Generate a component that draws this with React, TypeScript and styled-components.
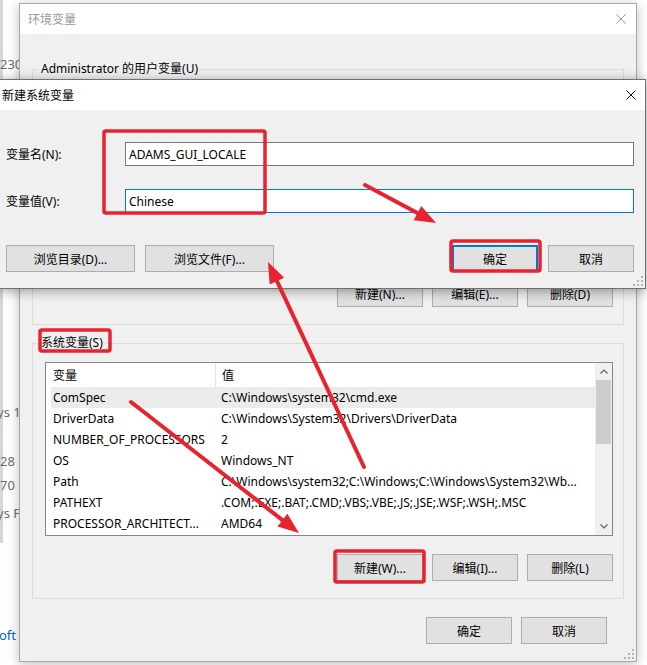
import styled, { createGlobalStyle } from "styled-components";

type EnvVar = { name: string; value: string };

const GlobalStyle = createGlobalStyle`
  html, body {
    margin: 0;
    padding: 0;
    background: #fff;
  }
  body {
    font-family: "Noto Sans", "Noto Sans CJK SC", sans-serif;
    font-size: 12px;
    color: #000;
  }
`;

const RED = "#e8232d";

const Desktop = styled.div`
  position: relative;
  width: 647px;
  height: 665px;
  overflow: hidden;
  background: #fff;
`;

/* the system window peeking out on the left */
const BackWindow = styled.div`
  position: absolute;
  left: 0;
  top: 0;
  width: 19px;
  height: 665px;
  overflow: hidden;
`;

const BackPanel = styled.div`
  height: 543px;
  border-left: 3px solid #d6d6d6;
  box-sizing: border-box;
  display: flex;
  flex-direction: column;
`;

const Snippet = styled.div<{ $gap: number; $shift?: number; $link?: boolean }>`
  margin-top: ${(p) => p.$gap}px;
  margin-left: ${(p) => (p.$shift ?? 0) - 3}px;
  line-height: 16px;
  font-size: 13px;
  white-space: nowrap;
  color: ${(p) => (p.$link ? "#0066cc" : "#6d6d6d")};
`;

const Window = styled.div<{ $active?: boolean }>`
  position: absolute;
  box-sizing: border-box;
  background: #f0f0f0;
  border: 1px solid ${(p) => (p.$active ? "#707070" : "#a8a8a8")};
  box-shadow: 0 2px 11px rgba(0, 0, 0, ${(p) => (p.$active ? 0.38 : 0.26)});
  display: flex;
  flex-direction: column;
`;

const EnvWindow = styled(Window)`
  left: 19px;
  top: 3px;
  width: 618px;
  height: 659px;
`;

const NewVarWindow = styled(Window)`
  left: -2px;
  top: 79px;
  width: 648px;
  height: 210px;
`;

const TitleBar = styled.div<{ $active?: boolean; $indent: number; $closeGap: number }>`
  height: 30px;
  flex: none;
  background: #fff;
  display: flex;
  align-items: center;
  justify-content: space-between;
  padding: 0 ${(p) => p.$closeGap}px 0 ${(p) => p.$indent}px;
  color: ${(p) => (p.$active ? "#000" : "#999")};
  font-size: 12px;
`;

const WindowBody = styled.div`
  flex: 1;
  display: flex;
  flex-direction: column;
`;

const EnvBody = styled(WindowBody)`
  padding-top: 35px;
`;

const NewVarBody = styled(WindowBody)`
  padding: 32px 11px 16px 7px;
`;

const GroupBox = styled.div<{ $gap?: number }>`
  margin: ${(p) => p.$gap ?? 0}px 12px 0;
  border: 1px solid #dcdcdc;
  padding: 0 10px 17px 12px;
  display: flex;
  flex-direction: column;
`;

const GroupLegend = styled.div`
  align-self: flex-start;
  margin: -9px 0 0 -6px;
  padding: 0 2px;
  line-height: 16px;
  background: #f0f0f0;
  white-space: nowrap;
`;

const ListView = styled.div`
  margin-top: 11px;
  height: 174px;
  box-sizing: border-box;
  border: 1px solid #828790;
  background: #fff;
  display: flex;
  overflow: hidden;
`;

const ListColumns = styled.div`
  flex: 1;
  min-width: 0;
  display: flex;
  flex-direction: column;
`;

const HeaderRow = styled.div`
  height: 24px;
  flex: none;
  display: flex;
  align-items: stretch;
`;

const HeaderCell = styled.div<{ $width?: number }>`
  display: flex;
  align-items: center;
  ${(p) => (p.$width ? `width: ${p.$width}px; border-right: 1px solid #e5e5e5;` : "flex: 1;")}
  padding-left: ${(p) => (p.$width ? 7 : 6)}px;
  box-sizing: border-box;
`;

const Row = styled.div<{ $selected?: boolean }>`
  height: 21px;
  flex: none;
  margin-left: 5px;
  display: flex;
  align-items: center;
  background: ${(p) => (p.$selected ? "#ebebeb" : "transparent")};
`;

const Cell = styled.div<{ $width?: number }>`
  ${(p) => (p.$width ? `width: ${p.$width}px; flex: none; padding-left: 2px;` : "flex: 1; min-width: 0;")}
  box-sizing: border-box;
  white-space: nowrap;
  overflow: hidden;
`;

const ScrollBar = styled.div`
  width: 17px;
  flex: none;
  background: #f0f0f0;
  display: flex;
  flex-direction: column;
  align-items: center;
`;

const ScrollArrow = styled.div`
  height: 17px;
  width: 17px;
  flex: none;
  display: flex;
  align-items: center;
  justify-content: center;
`;

const ScrollThumb = styled.div`
  width: 15px;
  height: 64px;
  background: #cdcdcd;
`;

const ScrollTrack = styled.div`
  flex: 1;
`;

const ButtonRow = styled.div<{ $gap: number; $top: number; $pad?: number }>`
  display: flex;
  justify-content: flex-end;
  gap: ${(p) => p.$gap}px;
  margin-top: ${(p) => p.$top}px;
  padding-right: ${(p) => p.$pad ?? 0}px;
`;

const Button = styled.button<{ $wide?: boolean; $default?: boolean }>`
  width: ${(p) => (p.$wide ? 129 : 86)}px;
  height: 27px;
  box-sizing: border-box;
  padding: 0;
  background: #e1e1e1;
  border: 1px solid ${(p) => (p.$default ? "#0078d7" : "#adadad")};
  box-shadow: ${(p) => (p.$default ? "inset 0 0 0 1px #0078d7" : "none")};
  font: inherit;
  color: #000;
`;

const Spacer = styled.div`
  flex: 1;
`;

const FieldRow = styled.div<{ $top?: number }>`
  display: grid;
  grid-template-columns: 119px 1fr;
  align-items: center;
  margin-top: ${(p) => p.$top ?? 0}px;
`;

const FieldLabel = styled.label`
  white-space: nowrap;
`;

const TextBox = styled.div<{ $focused?: boolean }>`
  height: 24px;
  box-sizing: border-box;
  border: 1px solid ${(p) => (p.$focused ? "#0078d7" : "#7a7a7a")};
  background: #fff;
  display: flex;
  align-items: center;
  padding-left: 3px;
`;

const Grip = styled.svg`
  position: absolute;
  right: 2px;
  bottom: 2px;
`;

const Annotations = styled.svg`
  position: absolute;
  left: 0;
  top: 0;
  pointer-events: none;
`;

const userVars: EnvVar[] = [
  { name: "OneDrive", value: "C:\\Users\\Administrator\\OneDrive" },
  { name: "Path", value: "C:\\Users\\Administrator\\AppData\\Local\\Microsoft\\WindowsApps;" },
  { name: "TEMP", value: "C:\\Users\\Administrator\\AppData\\Local\\Temp" },
  { name: "TMP", value: "C:\\Users\\Administrator\\AppData\\Local\\Temp" },
];

const systemVars: EnvVar[] = [
  { name: "ComSpec", value: "C:\\Windows\\system32\\cmd.exe" },
  { name: "DriverData", value: "C:\\Windows\\System32\\Drivers\\DriverData" },
  { name: "NUMBER_OF_PROCESSORS", value: "2" },
  { name: "OS", value: "Windows_NT" },
  { name: "Path", value: "C:\\Windows\\system32;C:\\Windows;C:\\Windows\\System32\\Wb..." },
  { name: "PATHEXT", value: ".COM;.EXE;.BAT;.CMD;.VBS;.VBE;.JS;.JSE;.WSF;.WSH;.MSC" },
  { name: "PROCESSOR_ARCHITECT...", value: "AMD64" },
];

function CloseGlyph({ color }: { color: string }) {
  return (
    <svg width="10" height="10" viewBox="0 0 10 10">
      <path d="M0.5 0.5 L9.5 9.5 M9.5 0.5 L0.5 9.5" stroke={color} strokeWidth="1" />
    </svg>
  );
}

function Chevron({ up }: { up?: boolean }) {
  return (
    <svg width="8" height="5" viewBox="0 0 8 5">
      <path d={up ? "M0.5 4.5 L4 1 L7.5 4.5" : "M0.5 0.5 L4 4 L7.5 0.5"} stroke="#606060" strokeWidth="1.2" fill="none" />
    </svg>
  );
}

function SizeGrip() {
  const dots = [
    [8, 0],
    [4, 4],
    [8, 4],
    [0, 8],
    [4, 8],
    [8, 8],
  ];
  return (
    <Grip width="10" height="10" viewBox="0 0 10 10">
      {dots.map(([x, y]) => (
        <rect key={`${x}-${y}`} x={x} y={y} width="2" height="2" fill="#b4b4b4" />
      ))}
    </Grip>
  );
}

function VarList({ vars, selected }: { vars: EnvVar[]; selected?: number }) {
  return (
    <ListView>
      <ListColumns>
        <HeaderRow>
          <HeaderCell $width={170}>变量</HeaderCell>
          <HeaderCell>值</HeaderCell>
        </HeaderRow>
        {vars.map((v, i) => (
          <Row key={v.name + i} $selected={i === selected}>
            <Cell $width={170}>{v.name}</Cell>
            <Cell>{v.value}</Cell>
          </Row>
        ))}
      </ListColumns>
      <ScrollBar>
        <ScrollArrow>
          <Chevron up />
        </ScrollArrow>
        <ScrollThumb />
        <ScrollTrack />
        <ScrollArrow>
          <Chevron />
        </ScrollArrow>
      </ScrollBar>
    </ListView>
  );
}

function Arrow({ x1, y1, x2, y2 }: { x1: number; y1: number; x2: number; y2: number }) {
  const len = 21;
  const half = 8;
  const d = Math.hypot(x2 - x1, y2 - y1);
  const ux = (x2 - x1) / d;
  const uy = (y2 - y1) / d;
  const bx = x2 - ux * len;
  const by = y2 - uy * len;
  const head = `${x2},${y2} ${bx - uy * half},${by + ux * half} ${bx + uy * half},${by - ux * half}`;
  return (
    <g>
      <line x1={x1} y1={y1} x2={bx + ux * 2} y2={by + uy * 2} stroke={RED} strokeWidth="4" strokeLinecap="round" />
      <polygon points={head} fill={RED} />
    </g>
  );
}

function Highlight({ x, y, w, h }: { x: number; y: number; w: number; h: number }) {
  return <rect x={x} y={y} width={w} height={h} rx="2" fill="none" stroke={RED} strokeWidth="3.5" />;
}

export default function App() {
  return (
    <>
      <GlobalStyle />
      <Desktop>
        <BackWindow>
          <BackPanel>
            <Snippet $gap={56}>230</Snippet>
            <Snippet $gap={332} $shift={-3}>ys 10</Snippet>
            <Snippet $gap={33}>28</Snippet>
            <Snippet $gap={8}>70</Snippet>
            <Snippet $gap={12} $shift={-3}>ys F</Snippet>
          </BackPanel>
          <Snippet $gap={47} $link>.</Snippet>
          <Snippet $gap={21} $link $shift={2}>oft</Snippet>
        </BackWindow>

        <EnvWindow>
          <TitleBar $indent={8} $closeGap={10}>
            <span>环境变量</span>
            <CloseGlyph color="#9a9a9a" />
          </TitleBar>
          <EnvBody>
            <GroupBox>
              <GroupLegend>Administrator 的用户变量(U)</GroupLegend>
              <VarList vars={userVars} />
              <ButtonRow $gap={9} $top={18}>
                <Button>新建(N)...</Button>
                <Button>编辑(E)...</Button>
                <Button>删除(D)</Button>
              </ButtonRow>
            </GroupBox>

            <GroupBox $gap={18}>
              <GroupLegend>系统变量(S)</GroupLegend>
              <VarList vars={systemVars} selected={0} />
              <ButtonRow $gap={9} $top={18}>
                <Button>新建(W)...</Button>
                <Button>编辑(I)...</Button>
                <Button>删除(L)</Button>
              </ButtonRow>
            </GroupBox>

            <ButtonRow $gap={9} $top={18} $pad={29}>
              <Button>确定</Button>
              <Button>取消</Button>
            </ButtonRow>
          </EnvBody>
          <SizeGrip />
        </EnvWindow>

        <NewVarWindow $active>
          <TitleBar $active $indent={3} $closeGap={9}>
            <span>新建系统变量</span>
            <CloseGlyph color="#111" />
          </TitleBar>
          <NewVarBody>
            <FieldRow>
              <FieldLabel>变量名(N):</FieldLabel>
              <TextBox>ADAMS_GUI_LOCALE</TextBox>
            </FieldRow>
            <FieldRow $top={23}>
              <FieldLabel>变量值(V):</FieldLabel>
              <TextBox $focused>Chinese</TextBox>
            </FieldRow>
            <ButtonRow $gap={10} $top={32}>
              <Button $wide>浏览目录(D)...</Button>
              <Button $wide>浏览文件(F)...</Button>
              <Spacer />
              <Button $default>确定</Button>
              <Button>取消</Button>
            </ButtonRow>
          </NewVarBody>
          <SizeGrip />
        </NewVarWindow>

        <Annotations width="647" height="665" viewBox="0 0 647 665">
          <Highlight x={104} y={131} w={161} h={82} />
          <Highlight x={451} y={241} w={89} h={30} />
          <Highlight x={40} y={330} w={70} h={21} />
          <Highlight x={335} y={551} w={89} h={31} />
          <Arrow x1={365} y1={185} x2={436} y2={223} />
          <Arrow x1={364} y1={467} x2={268} y2={262} />
          <Arrow x1={131} y1={402} x2={299} y2={533} />
        </Annotations>
      </Desktop>
    </>
  );
}
